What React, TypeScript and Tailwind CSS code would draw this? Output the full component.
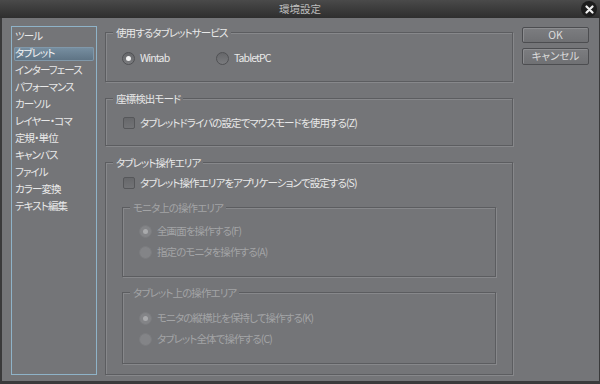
import React from 'react';

const categories = [
  'ツール',
  'タブレット',
  'インターフェース',
  'パフォーマンス',
  'カーソル',
  'レイヤー・コマ',
  '定規・単位',
  'キャンバス',
  'ファイル',
  'カラー変換',
  'テキスト編集',
];

const Radio: React.FC<{ checked?: boolean; disabled?: boolean; label: string; className?: string }> = ({
  checked,
  disabled,
  label,
  className = '',
}) => (
  <div className={`flex items-center h-[14px] gap-[5px] ${className}`}>
    <span
      className={`w-[13px] h-[13px] rounded-full border flex items-center justify-center shrink-0 ${
        disabled
          ? 'border-[#7b7c7f] bg-[#838487]'
          : 'border-[#505154] bg-gradient-to-b from-[#66676a] to-[#7a7b7e]'
      }`}
    >
      {checked && (
        <span className={`w-[5px] h-[5px] rounded-full ${disabled ? 'bg-[#a9aaac]' : 'bg-[#f4f4f4]'}`} />
      )}
    </span>
    <span className={disabled ? 'text-[#a3a4a6]' : 'text-[#e9e9e9]'}>{label}</span>
  </div>
);

const Checkbox: React.FC<{ label: string }> = ({ label }) => (
  <div className="flex items-center h-[14px] gap-[5px]">
    <span className="w-[12px] h-[12px] rounded-[2px] border border-[#56575a] bg-gradient-to-b from-[#67686b] to-[#727376] shrink-0" />
    <span className="text-[#e9e9e9]">{label}</span>
  </div>
);

const Group: React.FC<{ label: string; disabled?: boolean; className?: string; children: React.ReactNode }> = ({
  label,
  disabled,
  className = '',
  children,
}) => (
  <div
    className={`relative border border-[#5c5d60] shadow-[inset_1px_1px_0_#87888b,1px_1px_0_#87888b] ${className}`}
  >
    <span
      className={`absolute left-[7px] -top-[8px] px-[3px] h-[15px] leading-[15px] bg-[#747578] ${
        disabled ? 'text-[#a3a4a6]' : 'text-[#e9e9e9]'
      }`}
    >
      {label}
    </span>
    {children}
  </div>
);

const Button: React.FC<{ label: string; className?: string }> = ({ label, className = '' }) => (
  <button
    className={`w-[67px] border border-[#4c4d50] rounded-[2px] bg-gradient-to-b from-[#7c7d80] to-[#6f7073] shadow-[inset_1px_1px_0_#8c8d90] text-[#dcdcdc] leading-none flex items-center justify-center ${className}`}
  >
    {label}
  </button>
);

export default function App() {
  return (
    <div className="w-[600px] h-[384px] flex flex-col bg-[#747578] text-[10.5px] tracking-[-0.9px] font-['Noto_Sans_CJK_JP',sans-serif] [font-feature-settings:'palt'] select-none overflow-hidden">
      {/* title bar */}
      <div className="relative h-[18px] shrink-0 bg-gradient-to-b from-[#4a4a4a] to-[#2e2e2e] flex items-center justify-center">
        <span className="text-[#bdbdbd] text-[10.5px] tracking-[0px] leading-none">環境設定</span>
        <span className="absolute right-[3px] top-[1px] w-[16px] h-[16px] rounded-full bg-[#1d1d1d] flex items-center justify-center">
          <svg width="9" height="9" viewBox="0 0 9 9">
            <path d="M1.5 1.5 L7.5 7.5 M7.5 1.5 L1.5 7.5" stroke="#f0f0f0" strokeWidth="2.2" strokeLinecap="round" />
          </svg>
        </span>
      </div>

      <div className="flex-1 flex border-l-2 border-r border-b-[3px] border-[#3a3a3b] pl-[9px] pt-[8px]">
        {/* category list */}
        <div className="w-[86px] h-[349px] shrink-0 border border-[#8fb3c8] pt-[1px]">
          {categories.map((c) => (
            <div key={c} className="h-[17px] flex items-center">
              <div
                className={`h-[14px] w-[80px] ml-[2px] pl-[1px] flex items-center leading-none rounded-[2px] ${
                  c === 'タブレット'
                    ? 'bg-gradient-to-b from-[#7890a2] to-[#5d7283] shadow-[inset_0_0_0_1px_#8098aa] text-[#f2f2f2]'
                    : 'text-[#e9e9e9]'
                }`}
              >
                {c}
              </div>
            </div>
          ))}
        </div>

        {/* settings */}
        <div className="w-[408px] ml-[8px] flex flex-col">
          <Group label="使用するタブレットサービス" className="mt-[6px] h-[50px] pt-[18px] pl-[16px] flex">
            <Radio checked label="Wintab" className="w-[94px]" />
            <Radio label="TabletPC" />
          </Group>

          <Group label="座標検出モード" className="mt-[16px] h-[48px] pt-[17px] pl-[17px]">
            <Checkbox label="タブレットドライバの設定でマウスモードを使用する(Z)" />
          </Group>

          <Group label="タブレット操作エリア" className="mt-[16px] h-[213px] pt-[13px] px-[16px] pb-[10px] flex flex-col">
            <div className="pl-[1px]">
              <Checkbox label="タブレット操作エリアをアプリケーションで設定する(S)" />
            </div>
            <Group label="モニタ上の操作エリア" disabled className="mt-[17px] h-[70px] pt-[16px] pl-[16px] flex flex-col gap-[7px]">
              <Radio checked disabled label="全画面を操作する(F)" />
              <Radio disabled label="指定のモニタを操作する(A)" />
            </Group>
            <Group label="タブレット上の操作エリア" disabled className="mt-[15px] h-[72px] pt-[18px] pl-[16px] flex flex-col gap-[7px]">
              <Radio checked disabled label="モニタの縦横比を保持して操作する(K)" />
              <Radio disabled label="タブレット全体で操作する(C)" />
            </Group>
          </Group>
        </div>

        {/* buttons */}
        <div className="ml-[9px] pt-[1px] flex flex-col gap-[5px] tracking-[0px]">
          <Button label="OK" className="h-[16px]" />
          <Button label="キャンセル" className="h-[17px]" />
        </div>
      </div>
    </div>
  );
}
